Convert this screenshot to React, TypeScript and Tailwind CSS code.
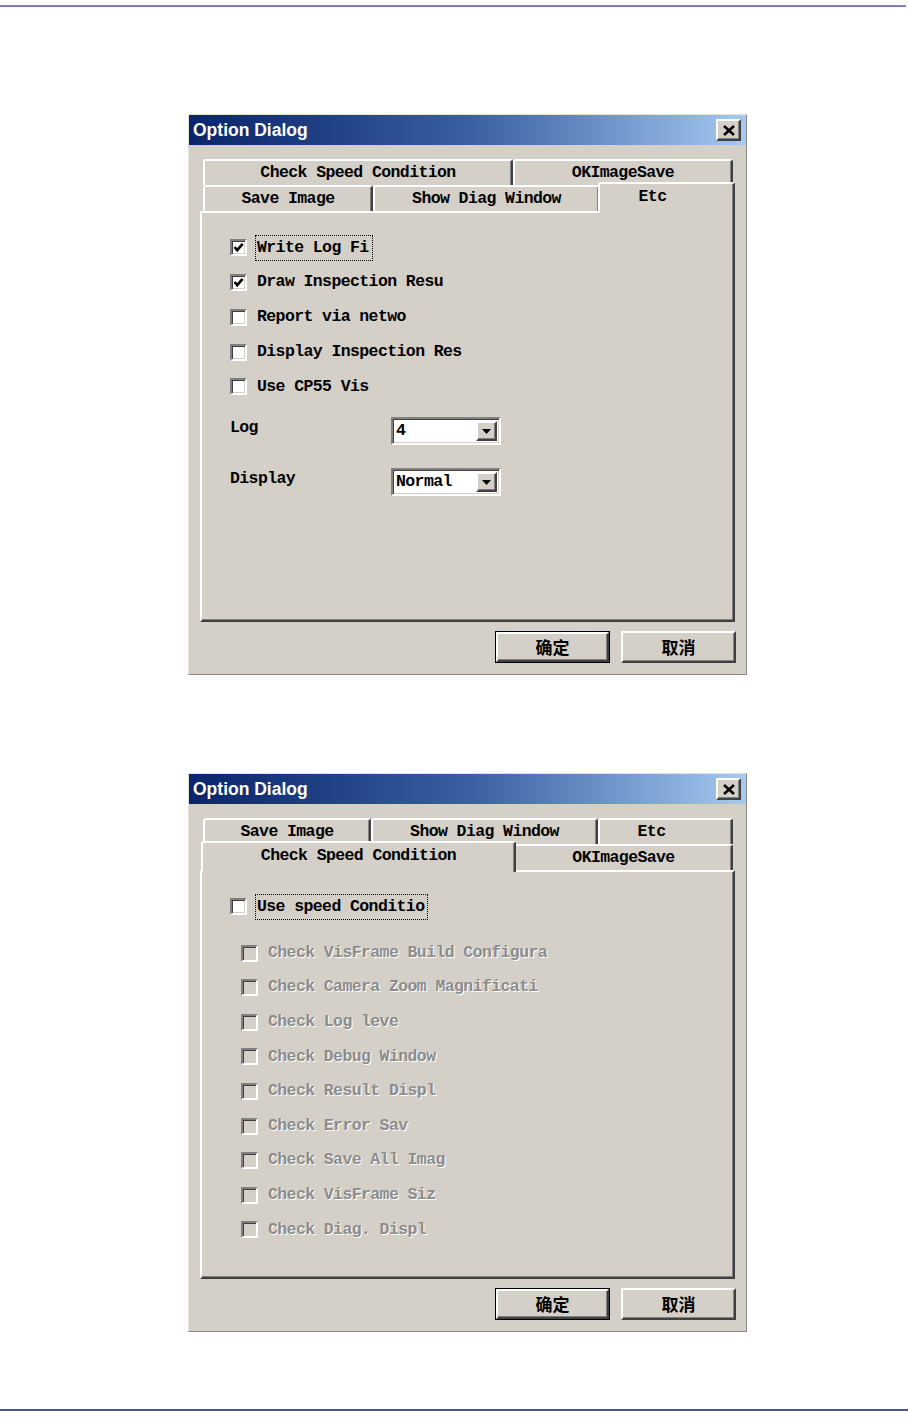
import clsx from "clsx";

const mono = "font-['Liberation_Mono',monospace] text-[16.5px] tracking-[-0.6px] font-bold leading-none";
const raised =
  "border-2 border-t-white border-l-white border-b-[#404040] border-r-[#404040] shadow-[inset_-1px_-1px_0_#808080]";
const sunken =
  "border-2 border-t-[#808080] border-l-[#808080] border-b-white border-r-white shadow-[inset_1px_1px_0_#404040,inset_-1px_-1px_0_#d4d0c8]";

function Checkbox({ checked = false, disabled = false }: { checked?: boolean; disabled?: boolean }) {
  return (
    <span
      className={clsx(
        "flex h-[17px] w-[17px] shrink-0 items-center justify-center",
        sunken,
        disabled ? "bg-[#d4d0c8]" : "bg-white"
      )}
    >
      {checked && (
        <svg width="11" height="11" viewBox="0 0 11 11">
          <path d="M1.5 5 L4.2 8.2 L9.6 1.8" fill="none" stroke="#000" strokeWidth="2.6" />
        </svg>
      )}
    </span>
  );
}

function CheckRow({
  label,
  checked,
  disabled,
  focus,
  className,
}: {
  label: string;
  checked?: boolean;
  disabled?: boolean;
  focus?: boolean;
  className?: string;
}) {
  return (
    <div className={clsx("flex items-center gap-[10px]", className)}>
      <Checkbox checked={checked} disabled={disabled} />
      <span
        className={clsx(
          mono,
          "whitespace-nowrap py-[3px] pr-[2px]",
          disabled ? "text-[#8c8c8c] [text-shadow:1px_1px_0_#ffffff]" : "text-black",
          focus && "outline outline-dotted outline-black outline-offset-[1px]"
        )}
      >
        {label}
      </span>
    </div>
  );
}

function Tab({ label, className, active = false }: { label: string; className: string; active?: boolean }) {
  return (
    <div
      className={clsx(
        "flex shrink-0 items-center justify-center rounded-t-[3px] border-l-2 border-t-2 border-r-2 border-l-white border-t-white border-r-[#404040] bg-[#d4d0c8] shadow-[inset_-1px_0_0_#808080] text-black",
        mono,
        active ? "relative z-10 -mx-[2px] -mt-[3px] -mb-[2px] h-[31px] pb-[3px]" : "h-[26px]",
        className
      )}
    >
      {label}
    </div>
  );
}

function Button({ label, isDefault = false }: { label: string; isDefault?: boolean }) {
  return (
    <div className={clsx("h-[32px] w-[115px]", isDefault ? "border border-black" : "")}>
      <div
        className={clsx(
          "flex h-full w-full items-center justify-center bg-[#d4d0c8] font-['Noto_Sans_CJK_SC',sans-serif] text-[17px] font-bold text-black",
          raised
        )}
      >
        {label}
      </div>
    </div>
  );
}

function Combo({ value }: { value: string }) {
  return (
    <div className={clsx("flex h-[28px] w-[110px] items-center bg-white p-[2px]", sunken)}>
      <span className={clsx(mono, "flex-1 pl-[1px] text-black")}>{value}</span>
      <span className={clsx("flex h-full w-[21px] items-center justify-center bg-[#d4d0c8]", raised)}>
        <svg width="9" height="5" viewBox="0 0 9 5">
          <path d="M0 0 H9 L4.5 5 Z" fill="#000" />
        </svg>
      </span>
    </div>
  );
}

function Dialog({
  rows,
  panelHeight,
  children,
}: {
  rows: React.ReactNode[];
  panelHeight: string;
  children: React.ReactNode;
}) {
  return (
    <div className="ml-[188px] flex w-[559px] flex-col border border-t-[#e4e2dc] border-l-[#e4e2dc] border-b-[#888888] border-r-[#888888] bg-[#d4d0c8]">
      <div className="flex h-[30px] items-center justify-between bg-linear-to-r from-[#0a246a] via-[#3a5ea2] to-[#a6caf0] pl-[4px] pr-[5px]">
        <span className="font-['Liberation_Sans',sans-serif] text-[17.5px] font-bold text-white">Option Dialog</span>
        <span className={clsx("flex h-[22px] w-[25px] items-center justify-center bg-[#d4d0c8]", raised)}>
          <svg width="12" height="11" viewBox="0 0 12 11">
            <path d="M1 1 L11 10 M11 1 L1 10" stroke="#000" strokeWidth="2.6" />
          </svg>
        </span>
      </div>
      <div className="mt-[14px] flex flex-col">{rows}</div>
      <div
        className={clsx(
          "ml-[11px] w-[535px] border-2 border-t-white border-l-white border-b-[#404040] border-r-[#404040] shadow-[inset_-1px_-1px_0_#808080] pl-[28px]",
          panelHeight
        )}
      >
        {children}
      </div>
      <div className="mt-[9px] mb-[11px] flex justify-end gap-[11px] pr-[10px]">
        <Button label="确定" isDefault />
        <Button label="取消" />
      </div>
    </div>
  );
}

export default function App() {
  return (
    <div className="flex h-[1421px] w-[908px] flex-col bg-white">
      <div className="mt-[5px] h-[2px] w-[906px] bg-[#7b7fbf]" />

      <div className="mt-[107px]">
        <Dialog
          panelHeight="h-[411px]"
          rows={[
            <div key="r1" className="ml-[14px] flex">
              <Tab label="Check Speed Condition" className="w-[310px]" />
              <Tab label="OKImageSave" className="w-[220px]" />
            </div>,
            <div key="r2" className="ml-[14px] flex">
              <Tab label="Save Image" className="w-[170px]" />
              <Tab label="Show Diag Window" className="w-[227px]" />
              <Tab label="Etc" className="w-[137px] items-start pt-[5px] pr-[28px]" active />
            </div>,
          ]}
        >
          <div className="flex flex-col pt-[17.5px]">
            <CheckRow label="Write Log Fi" checked focus className="h-[34.75px]" />
            <CheckRow label="Draw Inspection Resu" checked className="h-[34.75px]" />
            <CheckRow label="Report via netwo" className="h-[34.75px]" />
            <CheckRow label="Display Inspection Res" className="h-[34.75px]" />
            <CheckRow label="Use CP55 Vis" className="h-[34.75px]" />
            <div className="mt-[13px] flex items-start">
              <span className={clsx(mono, "w-[161px] pt-[3px] text-black")}>Log</span>
              <Combo value="4" />
            </div>
            <div className="mt-[23px] flex items-start">
              <span className={clsx(mono, "w-[161px] pt-[3px] text-black")}>Display</span>
              <Combo value="Normal" />
            </div>
          </div>
        </Dialog>
      </div>

      <div className="mt-[98px]">
        <Dialog
          panelHeight="h-[409px]"
          rows={[
            <div key="r1" className="ml-[14px] flex">
              <Tab label="Save Image" className="w-[168px]" />
              <Tab label="Show Diag Window" className="w-[227px]" />
              <Tab label="Etc" className="w-[135px] pr-[28px]" />
            </div>,
            <div key="r2" className="ml-[14px] flex">
              <Tab label="Check Speed Condition" className="w-[315px] items-start pt-[5px]" active />
              <Tab label="OKImageSave" className="w-[219px]" />
            </div>,
          ]}
        >
          <div className="flex flex-col pt-[17.5px]">
            <CheckRow label="Use speed Conditio" focus className="h-[34.75px]" />
            <div className="mt-[11.5px] flex flex-col pl-[11px]">
              <CheckRow label="Check VisFrame Build Configura" disabled className="h-[34.6px]" />
              <CheckRow label="Check Camera Zoom Magnificati" disabled className="h-[34.6px]" />
              <CheckRow label="Check Log leve" disabled className="h-[34.6px]" />
              <CheckRow label="Check Debug Window" disabled className="h-[34.6px]" />
              <CheckRow label="Check Result Displ" disabled className="h-[34.6px]" />
              <CheckRow label="Check Error Sav" disabled className="h-[34.6px]" />
              <CheckRow label="Check Save All Imag" disabled className="h-[34.6px]" />
              <CheckRow label="Check VisFrame Siz" disabled className="h-[34.6px]" />
              <CheckRow label="Check Diag. Displ" disabled className="h-[34.6px]" />
            </div>
          </div>
        </Dialog>
      </div>

      <div className="mt-[77px] h-[2px] w-full bg-[#4b4f9f]" />
    </div>
  );
}
